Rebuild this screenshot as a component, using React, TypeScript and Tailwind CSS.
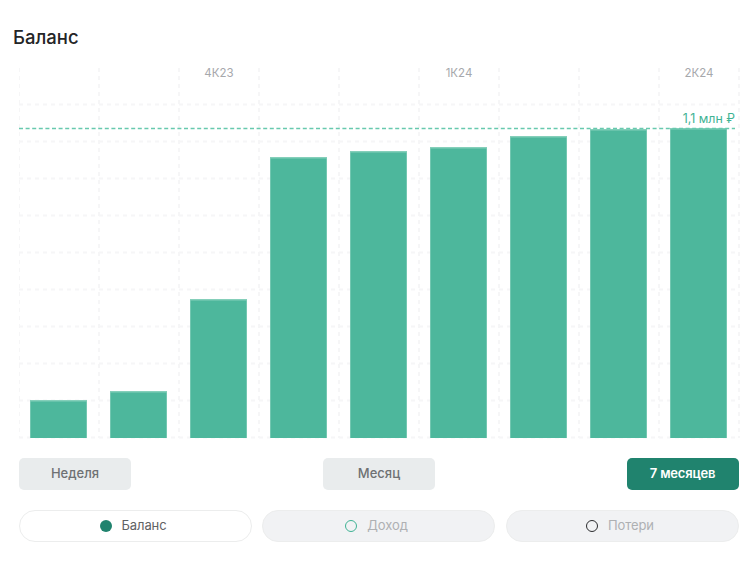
const bars = [400, 391, 299, 157, 151, 147, 136, 129, 128];
const columns = [19, 99, 179, 259, 339, 419, 499, 579, 659, 739];
const rows = [104, 141, 178, 215, 252, 289, 326, 363, 400, 437];
const quarters = [
  { x: 219, label: "4К23" },
  { x: 459, label: "1К24" },
  { x: 699, label: "2К24" },
];

function BalanceChart() {
  return (
    <svg width="722" height="380" viewBox="19 60 722 380" className="block" style={{ fontFamily: "Inter, sans-serif" }}>
      {columns.map((x) => (
        <line key={x} x1={x} x2={x} y1="68" y2="438" stroke="#f6f6f7" strokeWidth="2" strokeDasharray="4 4" />
      ))}
      {rows.map((y) => (
        <line key={y} x1="19" x2="739" y1={y + 0.5} y2={y + 0.5} stroke="#f6f6f7" strokeWidth="2" strokeDasharray="4 4" />
      ))}
      {quarters.map((q) => (
        <text key={q.label} x={q.x} y="77" textAnchor="middle" fontSize="11.5" fill="#a6a8ac">
          {q.label}
        </text>
      ))}
      {bars.map((top, i) => (
        <g key={i}>
          <rect x={30 + i * 80} y={top} width="57" height={438 - top} fill="#85cfba" />
          <rect x={30.7 + i * 80} y={top + 1.5} width="55.6" height={438 - top - 1.5} fill="#4db79c" />
        </g>
      ))}
      <line x1="19" x2="735" y1="128.5" y2="128.5" stroke="#68c9ae" strokeWidth="1.4" strokeDasharray="4 2.6" />
      <text x="735" y="123" textAnchor="end" fontSize="12.4" fill="#3fb394">
        1,1 млн ₽
      </text>
    </svg>
  );
}

function App() {
  return (
    <div className="w-[754px] h-[567px] bg-white font-['Inter',sans-serif] overflow-hidden">
      <h1 className="pl-[13px] pt-[26px] text-[18.5px] leading-[22px] font-medium text-[#242526]">Баланс</h1>
      <div className="pl-[19px] mt-[12px]">
        <BalanceChart />
      </div>
      <div className="mx-[19px] mt-[18px] w-[720px] flex justify-between">
        <button className="w-[112px] h-[32px] rounded-[5px] bg-[#e9eced] text-[13px] font-medium text-[#6e7173]">Неделя</button>
        <button className="w-[112px] h-[32px] rounded-[5px] bg-[#e9eced] text-[13px] font-medium text-[#6e7173]">Месяц</button>
        <button className="w-[112px] h-[32px] pr-[1px] rounded-[5px] bg-[#20836e] text-[13px] tracking-[-0.2px] font-semibold text-white">7 месяцев</button>
      </div>
      <div className="mx-[19px] mt-[20px] w-[720px] flex gap-[10px]">
        <div className="w-[233px] h-[32px] pr-[5px] rounded-full border border-[#eceded] bg-white flex items-center justify-center gap-[10px] text-[13px] tracking-[-0.1px] text-[#5f6264]">
          <span className="w-[12px] h-[12px] rounded-full bg-[#20836e]" />
          Баланс
        </div>
        <div className="w-[233px] h-[32px] pr-[4px] rounded-full border border-[#eceded] bg-[#f1f2f4] flex items-center justify-center gap-[10px] text-[13px] tracking-[-0.1px] text-[#aeb0b3]">
          <span className="w-[12px] h-[12px] rounded-full border border-[#3fb394]" />
          Доход
        </div>
        <div className="ml-auto w-[233px] h-[32px] pr-[5px] rounded-full border border-[#eceded] bg-[#f1f2f4] flex items-center justify-center gap-[10px] text-[13px] tracking-[-0.1px] text-[#aeb0b3]">
          <span className="w-[12px] h-[12px] rounded-full border border-[#2b2c2e]" />
          Потери
        </div>
      </div>
    </div>
  );
}

export default App;
